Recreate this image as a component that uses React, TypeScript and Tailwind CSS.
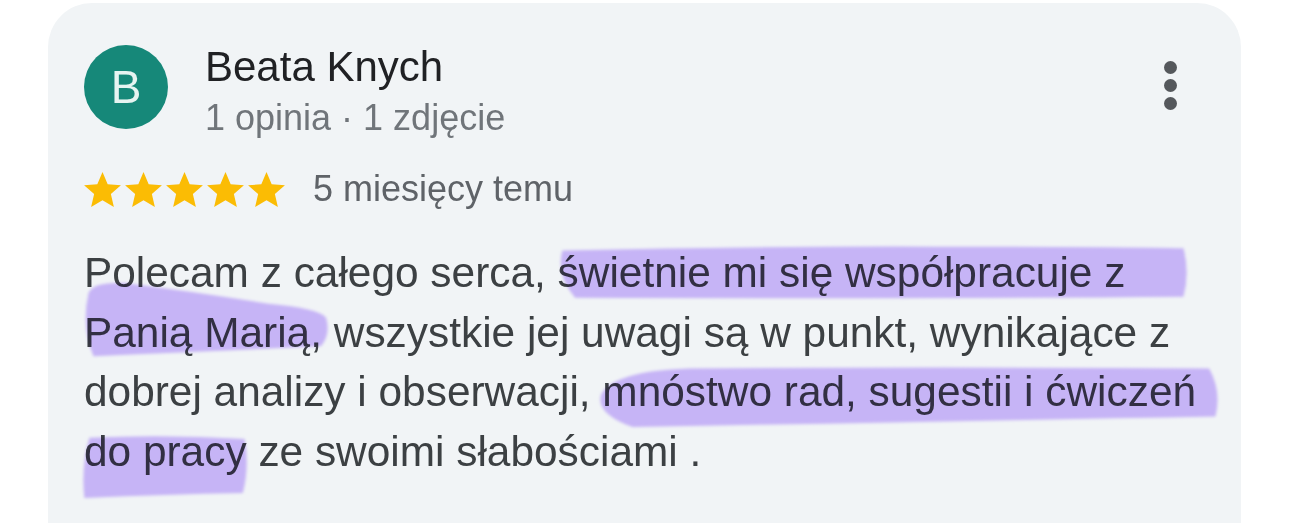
import React from "react";

const STAR = "M12 17.27L18.18 21l-1.64-7.03L22 9.24l-7.19-.61L12 2 9.19 8.63 2 9.24l5.46 4.73L5.82 21z";

function Star() {
    return (
        <svg viewBox="2 2 20 19" className="w-[37px] h-[35px]" fill="#fbbc04">
            <path d={STAR} />
        </svg>
    );
}

// marker stroke laid over a phrase; box offsets are relative to the phrase
function Marker({ children, box, d }: { children: React.ReactNode; box: string; d: string }) {
    return (
        <span className="relative">
            {children}
            <span className={"pointer-events-none absolute block mix-blend-multiply " + box}>
                <svg viewBox="0 0 100 100" preserveAspectRatio="none" className="block w-full h-full blur-[1.5px]">
                    <path d={d} fill="#d2bcff" />
                </svg>
            </span>
        </span>
    );
}

export default function App() {
    return (
        <div className="h-[523px] overflow-hidden bg-white font-[family-name:Liberation_Sans,Arial,sans-serif]">
            <div className="ml-[48px] mt-[3px] w-[1193px] min-h-[560px] rounded-t-[44px] bg-[#f1f4f6] pl-[36px] pr-[18px] pt-[42px]">
                <div className="flex items-start">
                    <div className="w-[84px] h-[84px] rounded-full bg-[#168879] flex items-center justify-center text-[46px] text-[#e6f4f1] leading-none">
                        B
                    </div>
                    <div className="ml-[37px] -mt-[2px]">
                        <div className="text-[42px] leading-[48px] text-[#202124]">Beata Knych</div>
                        <div className="mt-[6px] text-[36px] leading-[42px] text-[#70757a]">1 opinia · 1 zdjęcie</div>
                    </div>
                    <div className="ml-auto mr-[46px] mt-[16px] flex flex-col gap-[5px]">
                        <span className="w-[13px] h-[13px] rounded-full bg-[#55585c]" />
                        <span className="w-[13px] h-[13px] rounded-full bg-[#55585c]" />
                        <span className="w-[13px] h-[13px] rounded-full bg-[#55585c]" />
                    </div>
                </div>

                <div className="mt-[29px] flex items-center h-[42px]">
                    <div className="flex gap-[4px]">
                        <Star />
                        <Star />
                        <Star />
                        <Star />
                        <Star />
                    </div>
                    <span className="ml-[28px] text-[36px] leading-[42px] text-[#5f6368]">5 miesięcy temu</span>
                </div>

                <p className="mt-[33px] text-[42.4px] leading-[59.5px] text-[#3c4043]">
                    Polecam z całego serca,{" "}
                    <Marker box="-left-[2px] -right-[64px] -top-[4px] -bottom-[4px]" d="M1,10 Q30,2 60,3 Q88,3 99,6 Q100,50 99,94 Q60,98 3,96 Q0,55 1,10 Z">
                        świetnie mi się współpracuje z
                    </Marker>{" "}
                    <Marker box="-left-[3px] -right-[9px] -top-[28px] -bottom-[1px]" d="M3,16 Q5,0 18,3 Q45,14 75,30 Q95,36 98,48 Q100,70 96,86 Q55,92 5,99 Q0,60 3,16 Z">
                        Panią Marią,
                    </Marker>{" "}
                    wszystkie jej uwagi są w punkt, wynikające z dobrej analizy i obserwacji,{" "}
                    <Marker box="-left-[7px] -right-[26px] -top-[2px] -bottom-[14px]" d="M1,45 Q3,8 15,4 Q55,1 98,4 Q100,40 99,80 Q55,88 6,97 Q0,75 1,45 Z">
                        mnóstwo rad, sugestii i ćwiczeń
                    </Marker>{" "}
                    <Marker box="-left-[3px] -right-[3px] top-[6px] -bottom-[23px]" d="M5,6 Q50,0 97,8 Q100,50 96,92 Q50,94 2,100 Q0,50 5,6 Z">
                        do pracy
                    </Marker>{" "}
                    ze swoimi słabościami .
                </p>
            </div>
        </div>
    );
}
